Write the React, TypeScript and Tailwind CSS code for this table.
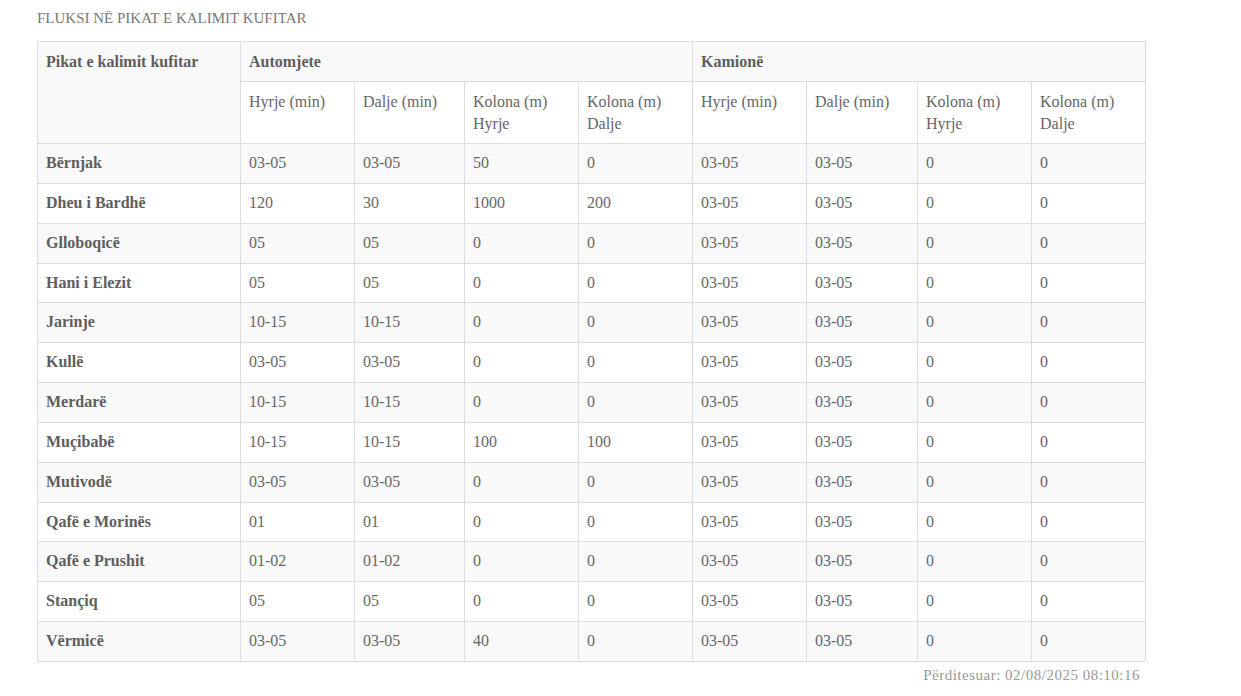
const rows: [string, string, string, string, string][] = [
  ["Bërnjak", "03-05", "03-05", "50", "0"],
  ["Dheu i Bardhë", "120", "30", "1000", "200"],
  ["Gllobоqicë".replace("о", "o"), "05", "05", "0", "0"],
  ["Hani i Elezit", "05", "05", "0", "0"],
  ["Jarinje", "10-15", "10-15", "0", "0"],
  ["Kullë", "03-05", "03-05", "0", "0"],
  ["Merdarë", "10-15", "10-15", "0", "0"],
  ["Muçibabë", "10-15", "10-15", "100", "100"],
  ["Mutivodë", "03-05", "03-05", "0", "0"],
  ["Qafë e Morinës", "01", "01", "0", "0"],
  ["Qafë e Prushit", "01-02", "01-02", "0", "0"],
  ["Stançiq", "05", "05", "0", "0"],
  ["Vërmicë", "03-05", "03-05", "40", "0"],
];

const head = "border border-[#dddddd] px-2 pt-[9px] pb-2 text-left align-top leading-[22px]";
const cell = "border border-[#dddddd] px-2 pt-2 pb-[8.85px] text-left align-top leading-[22px]";

function SubHeads() {
  return (
    <>
      <th className={`${head} font-normal text-[#666]`}>Hyrje (min)</th>
      <th className={`${head} font-normal text-[#666]`}>Dalje (min)</th>
      <th className={`${head} font-normal text-[#666]`}>Kolona (m)<br />Hyrje</th>
      <th className={`${head} font-normal text-[#666]`}>Kolona (m)<br />Dalje</th>
    </>
  );
}

export default function App() {
  return (
    <div className="ml-[37px] w-[1108px] text-[16px] text-[#666]" style={{ fontFamily: '"Liberation Serif", "DejaVu Serif", serif' }}>
      <h2 className="pt-2 pb-[13px] text-[15px] leading-5 text-[#777] font-normal">
        FLUKSI NË PIKAT E KALIMIT KUFITAR
      </h2>
      <table className="w-full table-fixed border-collapse">
        <colgroup>
          <col className="w-[203px]" />
          <col className="w-[114px]" />
          <col className="w-[110px]" />
          <col className="w-[114px]" />
          <col className="w-[114px]" />
          <col className="w-[114px]" />
          <col className="w-[111px]" />
          <col className="w-[114px]" />
          <col className="w-[114px]" />
        </colgroup>
        <thead>
          <tr className="bg-[#f9f9f9]">
            <th rowSpan={2} className={`${head} font-bold text-[#5e5e5e]`}>Pikat e kalimit kufitar</th>
            <th colSpan={4} className={`${head} font-bold text-[#5e5e5e]`}>Automjete</th>
            <th colSpan={4} className={`${head} font-bold text-[#5e5e5e]`}>Kamionë</th>
          </tr>
          <tr className="bg-white">
            <SubHeads />
            <SubHeads />
          </tr>
        </thead>
        <tbody>
          {rows.map((r, i) => (
            <tr key={r[0]} className={i % 2 === 0 ? "bg-[#f9f9f9]" : "bg-white"}>
              <td className={`${cell} font-bold text-[#5e5e5e]`}>{r[0]}</td>
              <td className={cell}>{r[1]}</td>
              <td className={cell}>{r[2]}</td>
              <td className={cell}>{r[3]}</td>
              <td className={cell}>{r[4]}</td>
              <td className={cell}>03-05</td>
              <td className={cell}>03-05</td>
              <td className={cell}>0</td>
              <td className={cell}>0</td>
            </tr>
          ))}
        </tbody>
      </table>
      <div className="pt-[3px] pr-[5px] text-right text-[15px] leading-5 tracking-[0.5px] text-[#999]">
        Përditesuar: 02/08/2025 08:10:16
      </div>
    </div>
  );
}
